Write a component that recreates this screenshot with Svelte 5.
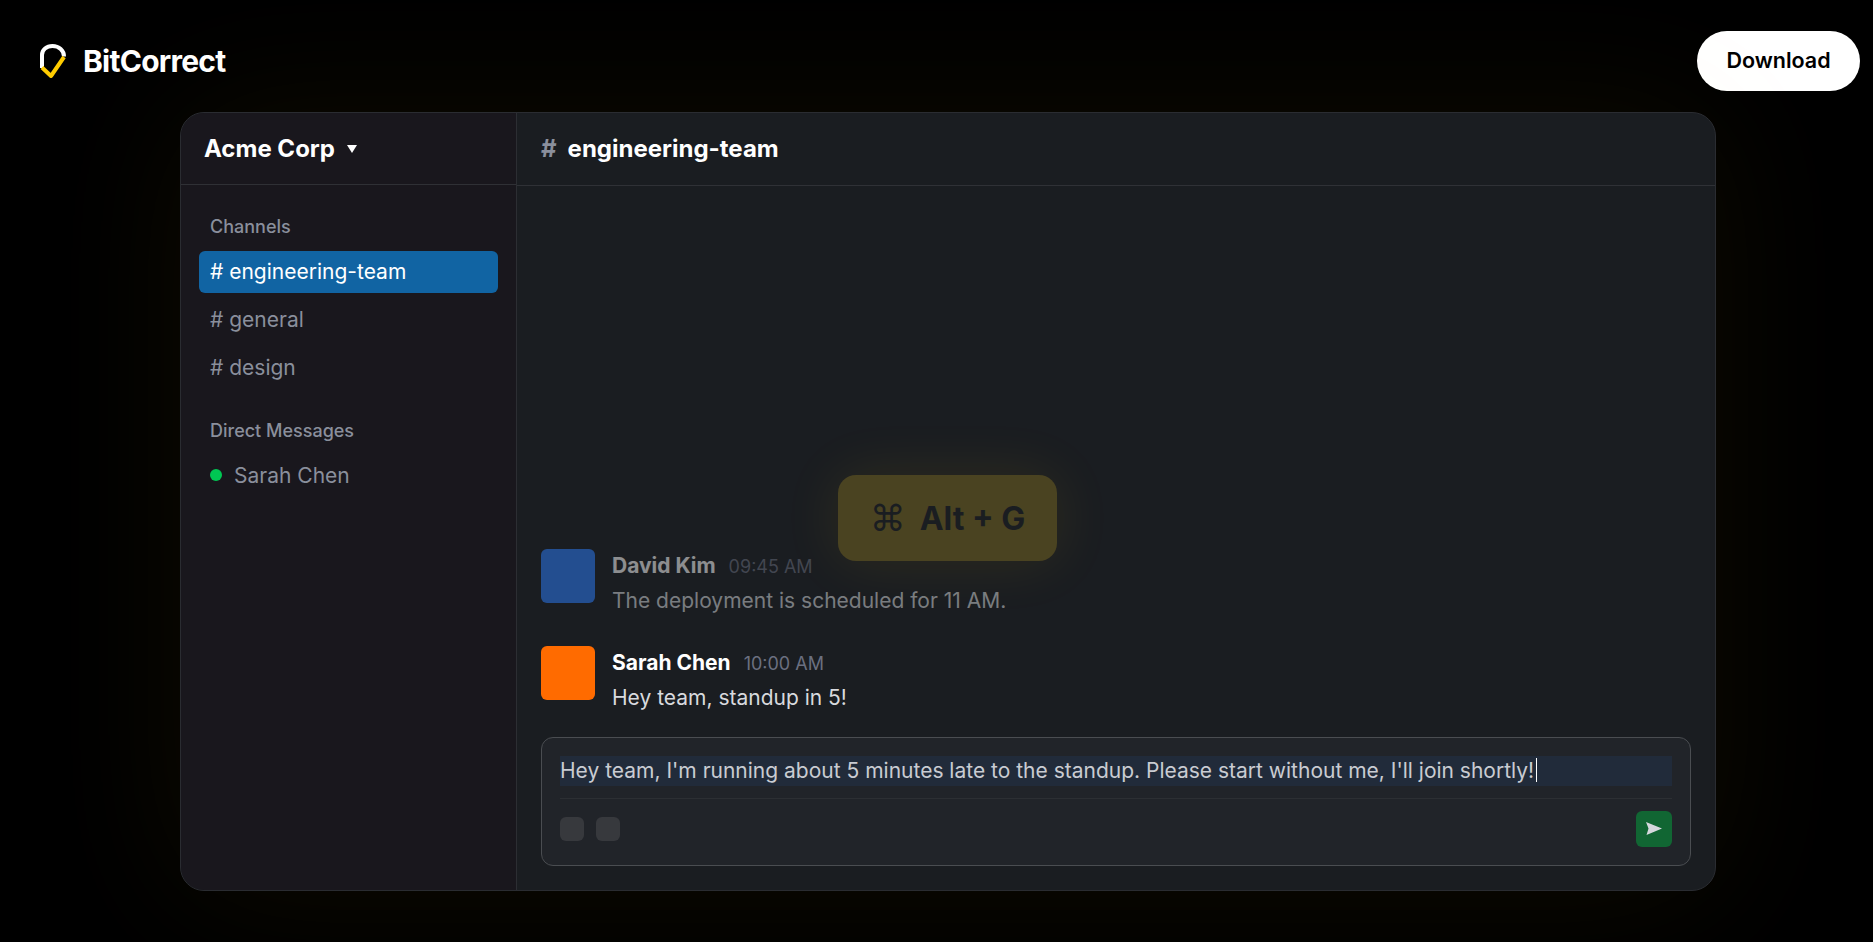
<script lang="ts">
  const channels = [
    { name: "engineering-team", active: true },
    { name: "general", active: false },
    { name: "design", active: false }
  ];
</script>

<div class="page">
  <header class="nav">
    <div class="brand">
      <svg class="logo" viewBox="0 0 26 34" width="26" height="34" fill="none" stroke-width="4">
        <path d="M2 24V11C2 5.5 6.5 2 12.5 2C19 2 24 6.5 24 12.5" stroke="#fff" />
        <path d="M2 23.5L11 32L24 13" stroke="#fc0" stroke-linejoin="round" />
      </svg>
      <span class="brand-name">BitCorrect</span>
    </div>
    <button type="button" class="download">Download</button>
  </header>

  <section class="card">
    <aside class="sidebar">
      <div class="workspace">
        <span>Acme Corp</span>
        <span class="caret-down"></span>
      </div>
      <div class="side-body">
        <div class="label">Channels</div>
        <div class="list">
          {#each channels as c}
            <div class="item" class:active={c.active}># {c.name}</div>
          {/each}
        </div>
        <div class="label dm">Direct Messages</div>
        <div class="item user"><i class="dot"></i>Sarah Chen</div>
      </div>
    </aside>

    <main class="main">
      <div class="channel-head">
        <span class="hash">#</span>
        <span>engineering-team</span>
      </div>
      <div class="messages">
        <div class="msg dim">
          <div class="avatar blue"></div>
          <div>
            <div class="meta"><b>David Kim</b><span class="time">09:45 AM</span></div>
            <div class="text">The deployment is scheduled for 11 AM.</div>
          </div>
        </div>
        <div class="msg">
          <div class="avatar orange"></div>
          <div>
            <div class="meta"><b>Sarah Chen</b><span class="time">10:00 AM</span></div>
            <div class="text">Hey team, standup in 5!</div>
          </div>
        </div>
      </div>
      <div class="composer">
        <div class="draft">Hey team, I'm running about 5 minutes late to the standup. Please start without me, I'll join shortly!<span class="cursor"></span></div>
        <div class="tools">
          <span class="tool"></span>
          <span class="tool"></span>
          <button type="button" class="send" aria-label="Send">
            <svg viewBox="0 0 16 14" width="16" height="14"><path d="M0 0L16 6.5L0.5 13L2.5 6.5Z" fill="#d5d8dd" /></svg>
          </button>
        </div>
      </div>
    </main>

    <div class="shortcut"><span class="cmd">⌘</span>Alt + G</div>
  </section>
</div>

<style>
  :global(body) {
    margin: 0;
    background: #fff;
  }

  .page {
    height: 942px;
    overflow: hidden;
    background: #000;
    font-family: Inter, "Liberation Sans", sans-serif;
    color: #fff;
  }

  .nav {
    display: flex;
    justify-content: space-between;
    align-items: center;
    height: 60px;
    padding: 31px 13px 21px 40px;
  }

  .brand {
    display: flex;
    align-items: center;
    gap: 17px;
  }

  .logo {
    display: block;
  }

  .brand-name {
    font-size: 30px;
    font-weight: 700;
    letter-spacing: -0.75px;
  }

  .download {
    width: 163px;
    height: 60px;
    padding: 0 0 2px;
    border: 0;
    border-radius: 30px;
    background: #fff;
    color: #000;
    font: 600 21.5px Inter, sans-serif;
  }

  .card {
    position: relative;
    display: flex;
    box-sizing: border-box;
    width: 1536px;
    height: 779px;
    margin-left: 180px;
    border: 1px solid #2a2c31;
    border-radius: 24px;
    overflow: hidden;
    background: #1a1d21;
    box-shadow: 0 0 150px rgba(255, 200, 0, 0.06);
  }

  .sidebar {
    width: 335px;
    flex: none;
    background: #19171d;
    border-right: 1px solid #2c2e33;
  }

  .workspace {
    display: flex;
    align-items: center;
    gap: 12px;
    box-sizing: border-box;
    height: 72px;
    padding-left: 23px;
    border-bottom: 1px solid #2f3035;
    font-size: 24px;
    font-weight: 700;
  }

  .caret-down {
    width: 0;
    height: 0;
    border-left: 5.5px solid transparent;
    border-right: 5.5px solid transparent;
    border-top: 8px solid #fff;
  }

  .side-body {
    padding: 30px 18px 0;
  }

  .label {
    padding-left: 11px;
    margin-bottom: 12px;
    font-size: 18px;
    line-height: 24px;
    font-weight: 500;
    color: #8a8f9c;
  }

  .dm {
    margin-top: 30px;
  }

  .list {
    display: flex;
    flex-direction: column;
    gap: 6px;
  }

  .item {
    height: 42px;
    padding-left: 11px;
    border-radius: 6px;
    font-size: 21px;
    line-height: 41px;
    color: #8a8f9c;
  }

  .item.active {
    background: #1164a3;
    color: #fff;
  }

  .user {
    display: flex;
    align-items: center;
    gap: 12px;
    padding-bottom: 2px;
    box-sizing: border-box;
  }

  .dot {
    width: 12px;
    height: 12px;
    border-radius: 50%;
    background: #00c853;
  }

  .main {
    flex: 1;
    display: flex;
    flex-direction: column;
    min-width: 0;
  }

  .channel-head {
    display: flex;
    align-items: center;
    gap: 11px;
    box-sizing: border-box;
    flex: none;
    height: 73px;
    padding: 0 0 2px 24px;
    border-bottom: 1px solid #2f3136;
    font-size: 24px;
    font-weight: 700;
  }

  .hash {
    color: #8a8f9c;
  }

  .messages {
    flex: 1;
    display: flex;
    flex-direction: column;
    justify-content: flex-end;
    gap: 24px;
    padding: 0 24px 18px;
  }

  .msg {
    display: flex;
    gap: 17px;
    height: 73px;
  }

  .dim {
    opacity: 0.5;
  }

  .avatar {
    width: 54px;
    height: 54px;
    border-radius: 6px;
  }

  .blue {
    background: #2d7fff;
  }

  .orange {
    background: #ff6b00;
  }

  .meta {
    display: flex;
    align-items: baseline;
    gap: 13px;
    font-size: 21px;
    line-height: 33px;
  }

  .meta b {
    font-weight: 700;
  }

  .time {
    font-size: 18px;
    color: #6b7080;
  }

  .text {
    font-size: 21px;
    line-height: 36px;
    color: #d8dade;
  }

  .composer {
    flex: none;
    box-sizing: border-box;
    height: 129px;
    margin: 0 24px 24px;
    padding: 18px 18px 0;
    border: 1px solid #4a4d51;
    border-radius: 12px;
    background: #212429;
  }

  .draft {
    display: flex;
    align-items: center;
    box-sizing: border-box;
    height: 30px;
    padding-bottom: 2px;
    background: #212b3a;
    font-size: 21px;
    color: #c9ccd2;
    white-space: pre;
  }

  .cursor {
    width: 1px;
    height: 24px;
    margin-left: 2px;
    background: #fff;
  }

  .tools {
    display: flex;
    align-items: center;
    gap: 12px;
    margin-top: 12px;
    padding-top: 12px;
    border-top: 1px solid #2c2f33;
  }

  .tool {
    width: 24px;
    height: 24px;
    border-radius: 6px;
    background: #37393d;
  }

  .send {
    display: flex;
    align-items: center;
    justify-content: center;
    width: 36px;
    height: 36px;
    margin-left: auto;
    padding: 0;
    border: 0;
    border-radius: 6px;
    background: #116633;
  }

  .shortcut {
    position: absolute;
    left: 657px;
    top: 362px;
    display: flex;
    align-items: center;
    justify-content: center;
    gap: 14px;
    width: 219px;
    height: 86px;
    border-radius: 18px;
    background: #4a4321;
    box-shadow: 0 0 60px rgba(255, 204, 0, 0.09);
    color: #1a1d21;
    font-size: 32px;
    font-weight: 700;
  }

  .cmd {
    font-family: "DejaVu Sans", sans-serif;
    font-weight: 400;
    font-size: 36px;
  }
</style>
